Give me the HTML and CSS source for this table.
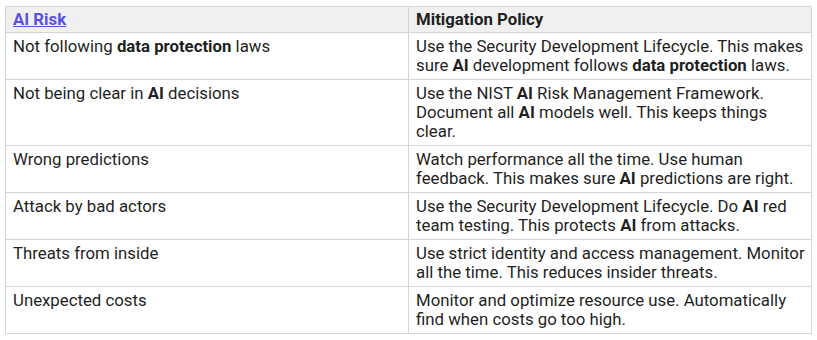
FILE: index.html
```html
<!DOCTYPE html>
<html lang="en">
<head>
<meta charset="utf-8">
<title>AI Risk and Mitigation Policy</title>
<link rel="stylesheet" href="styles.css">
</head>
<body>
<table class="policy-table">
  <thead>
    <tr>
      <th><a class="head-link" href="#">AI Risk</a></th>
      <th>Mitigation Policy</th>
    </tr>
  </thead>
  <tbody>
    <tr>
      <td>Not following <b>data protection</b> laws</td>
      <td>Use the Security Development Lifecycle. This makes sure <b>AI</b> development follows <b>data protection</b> laws.</td>
    </tr>
    <tr>
      <td>Not being clear in <b>AI</b> decisions</td>
      <td>Use the NIST <b>AI</b> Risk Management Framework. Document all <b>AI</b> models well. This keeps things clear.</td>
    </tr>
    <tr>
      <td>Wrong predictions</td>
      <td>Watch performance all the time. Use human feedback. This makes sure <b>AI</b> predictions are right.</td>
    </tr>
    <tr>
      <td>Attack by bad actors</td>
      <td>Use the Security Development Lifecycle. Do <b>AI</b> red team testing. This protects <b>AI</b> from attacks.</td>
    </tr>
    <tr>
      <td>Threats from inside</td>
      <td>Use strict identity and access management. Monitor all the time. This reduces insider threats.</td>
    </tr>
    <tr>
      <td>Unexpected costs</td>
      <td>Monitor and optimize resource use. Automatically find when costs go too high.</td>
    </tr>
  </tbody>
</table>
</body>
</html>
```
FILE: styles.css
```css
html, body {
  margin: 0;
  background: #ffffff;
}

body {
  padding: 6px 5px;
  font-family: Roboto, "Noto Sans", Arial, sans-serif;
  font-size: 16.8px;
  line-height: 19px;
  color: #1f1f1f;
}

.policy-table {
  width: 100%;
  border-collapse: collapse;
  table-layout: fixed;
}

.policy-table th,
.policy-table td {
  width: 50%;
  border: 1px solid #d3d5d9;
  padding: 4px 5px 4px 7px;
  text-align: left;
  vertical-align: top;
}

.policy-table th {
  background: #f0f0f0;
  font-weight: 700;
  padding-top: 3px;
  padding-bottom: 3px;
}

.policy-table b {
  font-weight: 700;
}

.head-link {
  color: #5a4fe6;
  text-decoration: underline;
}
```
